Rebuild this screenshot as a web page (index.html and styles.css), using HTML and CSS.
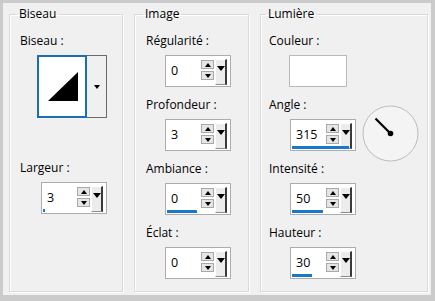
FILE: index.html
```html
<!DOCTYPE html>
<html lang="fr">
<head>
  <meta charset="UTF-8" />
  <title>Biseau intérieur</title>
  <link rel="stylesheet" href="styles.css">
</head>
<body>
  <div class="window">
    <fieldset class="group group-biseau">
      <legend>Biseau</legend>
      <div class="field">
        <span class="label">Biseau :</span>
        <div class="bevel-picker">
          <div class="bevel-preview">
            <svg width="46" height="59" viewBox="0 0 46 59">
              <polygon points="9,44 39,44 39,15" fill="#000" />
            </svg>
          </div>
          <div class="bevel-drop"><span class="arrow-small"></span></div>
        </div>
      </div>
      <div class="field field-largeur">
        <span class="label">Largeur :</span>
        <div class="spin">
          <span class="spin-value">3</span>
          <span class="spin-bar" style="width: 2px"></span>
          <span class="spin-arrows">
            <span class="spin-btn spin-up"></span>
            <span class="spin-btn spin-down"></span>
          </span>
          <span class="spin-drop"></span>
        </div>
      </div>
    </fieldset>

    <fieldset class="group group-image">
      <legend>Image</legend>
      <div class="field">
        <span class="label">Régularité :</span>
        <div class="spin">
          <span class="spin-value">0</span>
          <span class="spin-arrows">
            <span class="spin-btn spin-up"></span>
            <span class="spin-btn spin-down"></span>
          </span>
          <span class="spin-drop"></span>
        </div>
      </div>
      <div class="field">
        <span class="label">Profondeur :</span>
        <div class="spin">
          <span class="spin-value">3</span>
          <span class="spin-arrows">
            <span class="spin-btn spin-up"></span>
            <span class="spin-btn spin-down"></span>
          </span>
          <span class="spin-drop"></span>
        </div>
      </div>
      <div class="field">
        <span class="label">Ambiance :</span>
        <div class="spin">
          <span class="spin-value">0</span>
          <span class="spin-bar" style="width: 30px"></span>
          <span class="spin-arrows">
            <span class="spin-btn spin-up"></span>
            <span class="spin-btn spin-down"></span>
          </span>
          <span class="spin-drop"></span>
        </div>
      </div>
      <div class="field">
        <span class="label">Éclat :</span>
        <div class="spin">
          <span class="spin-value">0</span>
          <span class="spin-arrows">
            <span class="spin-btn spin-up"></span>
            <span class="spin-btn spin-down"></span>
          </span>
          <span class="spin-drop"></span>
        </div>
      </div>
    </fieldset>

    <fieldset class="group group-light">
      <legend>Lumière</legend>
      <div class="field">
        <span class="label">Couleur :</span>
        <div class="swatch"></div>
      </div>
      <div class="field">
        <span class="label">Angle :</span>
        <div class="angle-row">
          <div class="spin">
            <span class="spin-value">315</span>
            <span class="spin-bar" style="width: 57px"></span>
            <span class="spin-arrows">
              <span class="spin-btn spin-up"></span>
              <span class="spin-btn spin-down"></span>
            </span>
            <span class="spin-drop"></span>
          </div>
          <svg class="dial" width="57" height="57" viewBox="0 0 57 57">
            <circle cx="28.5" cy="28.5" r="27.5" fill="#f4f4f4" stroke="#bcbcbc" />
            <line x1="28.5" y1="28.5" x2="13.5" y2="13.5" stroke="#000" stroke-width="2.2" />
            <circle cx="28.5" cy="28.5" r="2.8" fill="#000" />
          </svg>
        </div>
      </div>
      <div class="field">
        <span class="label">Intensité :</span>
        <div class="spin">
          <span class="spin-value">50</span>
          <span class="spin-bar" style="width: 31px"></span>
          <span class="spin-arrows">
            <span class="spin-btn spin-up"></span>
            <span class="spin-btn spin-down"></span>
          </span>
          <span class="spin-drop"></span>
        </div>
      </div>
      <div class="field">
        <span class="label">Hauteur :</span>
        <div class="spin">
          <span class="spin-value">30</span>
          <span class="spin-bar" style="width: 20px"></span>
          <span class="spin-arrows">
            <span class="spin-btn spin-up"></span>
            <span class="spin-btn spin-down"></span>
          </span>
          <span class="spin-drop"></span>
        </div>
      </div>
    </fieldset>
  </div>
</body>
</html>
```

FILE: styles.css
```css
body {
  margin: 0;
  background: #cbcbcb;
  font-family: 'Open Sans', 'Noto Sans', sans-serif;
  font-size: 12px;
  color: #000;
}

.window {
  display: flex;
  gap: 11px;
  margin: 3px;
  width: 428px;
  height: 292px;
  box-sizing: border-box;
  padding: 3px 3px 3px 6px;
  background: #f0f0f0;
}

/* group boxes */
.group {
  flex: none;
  box-sizing: border-box;
  margin: 0;
  min-width: 0;
  padding: 11px 0 0 10px;
  border: 1px solid #d9d9d9;
  box-shadow: inset 1px 1px 0 #fff, 1px 1px 0 #fff;
}

.group legend {
  padding: 0 2px;
  margin-left: -3px;
  line-height: 16px;
}

.group-biseau {
  width: 114px;
}

.group-image {
  width: 115px;
  padding-left: 11px;
}

.group-light {
  width: 168px;
  padding-left: 8px;
}

.field {
  margin-bottom: 10px;
}

.label {
  display: block;
  line-height: 16px;
  margin-bottom: 6px;
}

.field-largeur {
  margin-top: 42px;
}

/* spin box */
.spin {
  position: relative;
  display: flex;
  width: 66px;
  height: 32px;
  box-sizing: border-box;
  margin-left: 19px;
  border: 1px solid #adadad;
  background: #fff;
}

.group-biseau .spin {
  margin-left: 21px;
}

.group-light .spin {
  margin-left: 21px;
}

.spin-value {
  flex: 1;
  padding-left: 5px;
  line-height: 30px;
  font-size: 12.5px;
}

.spin-bar {
  position: absolute;
  left: 1px;
  bottom: 1px;
  height: 3px;
  background: #1a78c8;
}

.spin-arrows {
  display: flex;
  flex-direction: column;
  gap: 2px;
  width: 13px;
  margin-top: 4px;
}

.spin-btn {
  display: flex;
  align-items: center;
  justify-content: center;
  height: 9px;
  box-sizing: border-box;
  border: 1px solid #a9a9a9;
  background: #e5e5e5;
}

.spin-up::before {
  content: "";
  border-left: 3.5px solid transparent;
  border-right: 3.5px solid transparent;
  border-bottom: 4px solid #000;
}

.spin-down::before {
  content: "";
  border-left: 3.5px solid transparent;
  border-right: 3.5px solid transparent;
  border-top: 4px solid #000;
}

.spin-drop {
  display: flex;
  justify-content: center;
  width: 12px;
  height: 26px;
  box-sizing: border-box;
  margin: 3px 3px 0 1px;
  border-top: 1px solid #fff;
  border-left: 1px solid #fff;
  border-right: 2px solid #3a3a3a;
  border-bottom: 1px solid #8f8f8f;
  background: #ececec;
}

.spin-drop::before {
  content: "";
  margin-top: 6px;
  height: 0;
  border-left: 4.5px solid transparent;
  border-right: 4.5px solid transparent;
  border-top: 5px solid #000;
}

/* bevel picker */
.bevel-picker {
  display: flex;
  width: 70px;
  height: 63px;
  margin-left: 17px;
}

.bevel-preview {
  width: 50px;
  box-sizing: border-box;
  border: 2px solid #1d6db6;
  background: #fff;
}

.bevel-preview svg {
  display: block;
}

.bevel-drop {
  display: flex;
  flex: 1;
  align-items: center;
  justify-content: center;
  border: 1px solid #6a6a6a;
  border-left: none;
  background: #f0f0f0;
}

.arrow-small {
  border-left: 3.5px solid transparent;
  border-right: 3.5px solid transparent;
  border-top: 4px solid #000;
}

/* light */
.swatch {
  width: 58px;
  height: 32px;
  box-sizing: border-box;
  margin-left: 20px;
  border: 1px solid #b9b9b9;
  background: #fff;
}

.angle-row {
  display: flex;
  align-items: center;
}

.dial {
  display: block;
  margin: -15px 0 -11px 6px;
}
```
